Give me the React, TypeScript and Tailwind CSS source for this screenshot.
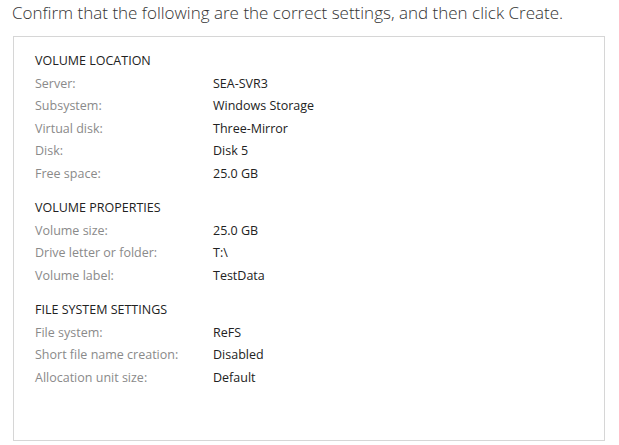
import React from 'react';

type Row = [string, string];

const sections: { title: string; rows: Row[] }[] = [
  {
    title: 'VOLUME LOCATION',
    rows: [
      ['Server:', 'SEA-SVR3'],
      ['Subsystem:', 'Windows Storage'],
      ['Virtual disk:', 'Three-Mirror'],
      ['Disk:', 'Disk 5'],
      ['Free space:', '25.0 GB'],
    ],
  },
  {
    title: 'VOLUME PROPERTIES',
    rows: [
      ['Volume size:', '25.0 GB'],
      ['Drive letter or folder:', 'T:\\'],
      ['Volume label:', 'TestData'],
    ],
  },
  {
    title: 'FILE SYSTEM SETTINGS',
    rows: [
      ['File system:', 'ReFS'],
      ['Short file name creation:', 'Disabled'],
      ['Allocation unit size:', 'Default'],
    ],
  },
];

export default function App() {
  return (
    <div
      className="w-[619px] h-[445px] bg-white overflow-hidden"
      style={{ fontFamily: '"Segoe UI", "Open Sans", "Noto Sans", sans-serif' }}
    >
      <p className="pl-3 pt-[1px] h-[36px] text-[17px] font-light text-[#333] leading-[24px]">
        Confirm that the following are the correct settings, and then click Create.
      </p>
      <div className="ml-[13px] w-[592px] h-[405px] border border-[#d6d6d6] pl-[21px] pt-[13px] flex flex-col gap-[12px]">
        {sections.map((s) => (
          <section key={s.title}>
            <h3 className="text-[12.5px] leading-[22.5px] text-[#222]">{s.title}</h3>
            {s.rows.map(([label, value]) => (
              <div key={label} className="flex text-[12.5px] leading-[22.5px]">
                <span className="w-[178px] text-[#8a8a8a]">{label}</span>
                <span className="text-[#222]">{value}</span>
              </div>
            ))}
          </section>
        ))}
      </div>
    </div>
  );
}
